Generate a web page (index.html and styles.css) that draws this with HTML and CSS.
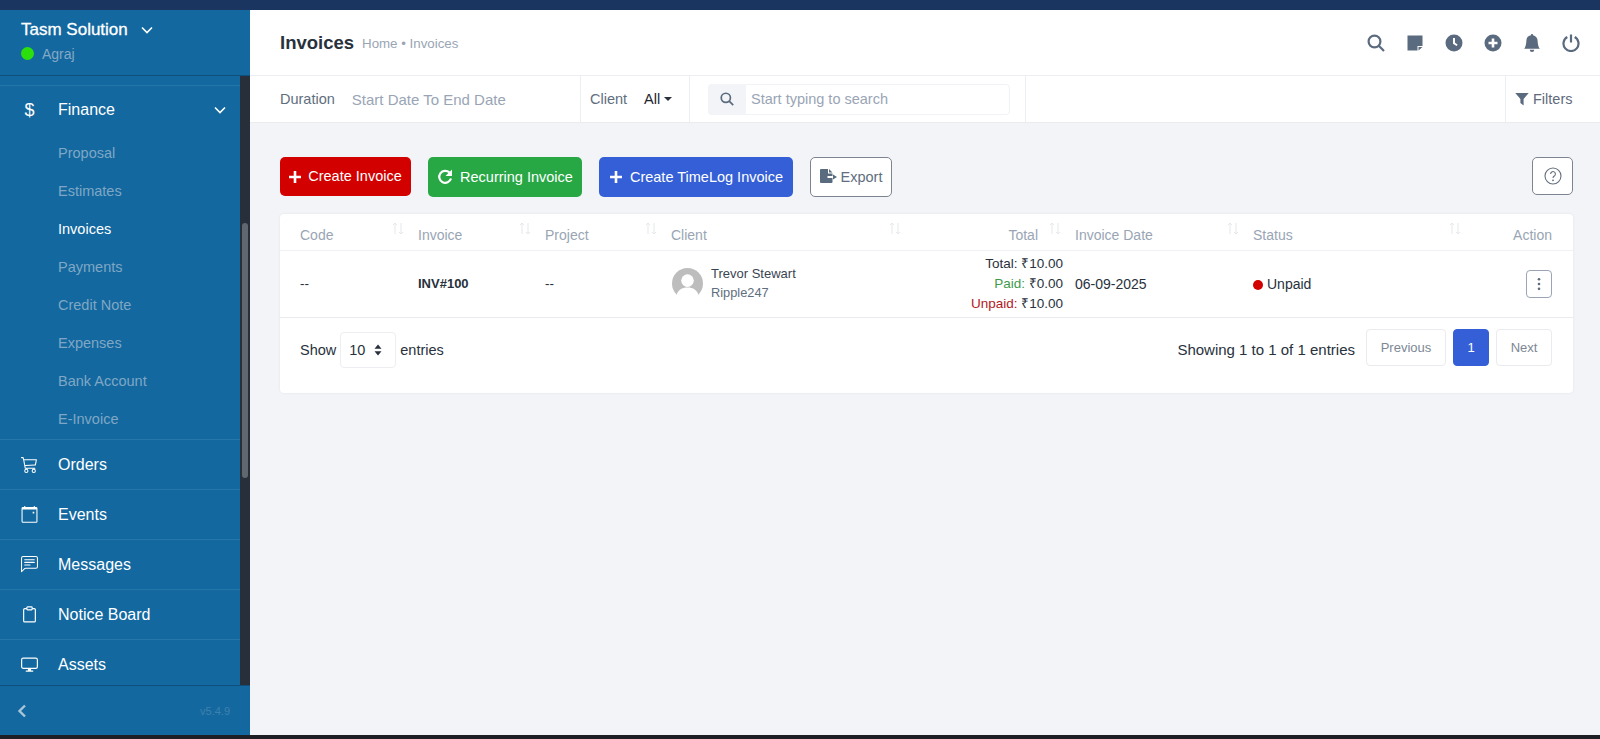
FILE: index.html
```html
<!DOCTYPE html>
<html lang="en">
<head>
<meta charset="utf-8">
<title>Invoices</title>
<link rel="stylesheet" href="styles.css">
</head>
<body>
<div class="app">
  <div class="topbar"></div>
  <div class="shell">
    <aside class="side">
      <div class="side-head">
        <div class="brand">Tasm Solution
          <svg class="brand-chev" viewBox="0 0 12 8"><path d="M1 1.500l5 5 5-5"/></svg>
        </div>
        <div class="user"><span class="online"></span><span>Agraj</span></div>
      </div>
      <div class="side-body">
        <nav class="nav">
          <div class="nav-group">
            <div class="nav-item nav-open">
              <span class="nav-icon nav-dollar">$</span><span class="nav-label">Finance</span>
              <svg class="nav-chev" viewBox="0 0 12 8"><path d="M1 1.500l5 5 5-5"/></svg>
            </div>
            <a class="sub">Proposal</a>
            <a class="sub">Estimates</a>
            <a class="sub sub-active">Invoices</a>
            <a class="sub">Payments</a>
            <a class="sub">Credit Note</a>
            <a class="sub">Expenses</a>
            <a class="sub">Bank Account</a>
            <a class="sub">E-Invoice</a>
          </div>
          <div class="nav-item">
            <span class="nav-icon"><svg viewBox="0 0 16 16" class="i-fill"><path d="M0 1.500A.5.5 0 0 1 .5 1H2a.5.5 0 0 1 .485.379L2.890 3H14.500a.5.5 0 0 1 .49.598l-1 5a.5.5 0 0 1-.465.401l-9.397.472L4.415 11H13a.5.5 0 0 1 0 1H4a.5.5 0 0 1-.491-.408L2.010 3.607 1.610 2H.5a.5.5 0 0 1-.5-.5zM3.102 4l.84 4.479 9.144-.459L13.890 4H3.102zM5 12a2 2 0 1 0 0 4 2 2 0 0 0 0-4zm7 0a2 2 0 1 0 0 4 2 2 0 0 0 0-4zm-7 1a1 1 0 1 1 0 2 1 1 0 0 1 0-2zm7 0a1 1 0 1 1 0 2 1 1 0 0 1 0-2z"/></svg></span>
            <span class="nav-label">Orders</span>
          </div>
          <div class="nav-item">
            <span class="nav-icon"><svg viewBox="0 0 16 16" class="i-fill"><path fill-rule="evenodd" d="M3 0h1v1h8V0h1v1h1.200a1.300 1.300 0 0 1 1.300 1.300v12.200a1.300 1.300 0 0 1-1.300 1.300H1.800a1.300 1.300 0 0 1-1.300-1.300V2.300A1.300 1.300 0 0 1 1.800 1H3zM1.500 3.200v11.300c0 .2.100.3.300.3h12.400c.2 0 .3-.1.3-.3V3.200zM11 5.500h1.500V7H11z"/></svg></span>
            <span class="nav-label">Events</span>
          </div>
          <div class="nav-item">
            <span class="nav-icon"><svg viewBox="0 0 16 16" class="i-fill"><path d="M14 1a1 1 0 0 1 1 1v8a1 1 0 0 1-1 1H4.414A2 2 0 0 0 3 11.586l-2 2V2a1 1 0 0 1 1-1h12zM2 0a2 2 0 0 0-2 2v12.793a.5.5 0 0 0 .854.353l2.853-2.853A1 1 0 0 1 4.414 12H14a2 2 0 0 0 2-2V2a2 2 0 0 0-2-2H2z"/><path d="M3 3.500a.5.5 0 0 1 .5-.5h9a.5.5 0 0 1 0 1h-9a.5.5 0 0 1-.5-.5zM3 6a.5.5 0 0 1 .5-.5h9a.5.5 0 0 1 0 1h-9A.5.5 0 0 1 3 6zm0 2.500a.5.5 0 0 1 .5-.5h5a.5.5 0 0 1 0 1h-5a.5.5 0 0 1-.5-.5z"/></svg></span>
            <span class="nav-label">Messages</span>
          </div>
          <div class="nav-item">
            <span class="nav-icon"><svg viewBox="0 0 16 16" class="i-line"><path d="M5.500 2.500H3.500a1 1 0 0 0-1 1v10.500a1 1 0 0 0 1 1h9a1 1 0 0 0 1-1V3.500a1 1 0 0 0-1-1h-2"/><rect x="5.500" y=".8" width="5" height="2.800" rx=".7"/></svg></span>
            <span class="nav-label">Notice Board</span>
          </div>
          <div class="nav-item">
            <span class="nav-icon"><svg viewBox="0 0 16 16" class="i-line"><rect x=".6" y="2" width="14.800" height="9.600" rx="1.500"/><path class="i-stand" d="M6.500 11.800h3v1.800h2v1.200h-7v-1.200h2z"/></svg></span>
            <span class="nav-label">Assets</span>
          </div>
        </nav>
        <div class="track"><div class="thumb"></div></div>
      </div>
      <div class="side-foot">
        <svg class="collapse" viewBox="0 0 10 14"><path d="M8 1.500L2.500 7 8 12.500"/></svg>
        <span class="version">v5.4.9</span>
      </div>
    </aside>

    <main class="main">
      <header class="head">
        <h1 class="title">Invoices</h1>
        <span class="crumb">Home • Invoices</span>
        <div class="head-icons">
          <svg viewBox="0 0 18 18" class="hi-line"><circle cx="7.500" cy="7.500" r="5.900"/><path d="M11.800 11.800L17 17"/></svg>
          <svg viewBox="0 0 18 18" class="hi-fill"><path d="M1.500 1.500h15v10.500h-5v4.500h-10zM12.500 13h4l-4 3.500z"/></svg>
          <svg viewBox="0 0 18 18" class="hi-fill"><path fill-rule="evenodd" d="M9 .5a8.500 8.500 0 1 1 0 17A8.500 8.500 0 0 1 9 .5zM8 4v5.700l3.600 2.200 1-1.500-2.600-1.600V4z"/></svg>
          <svg viewBox="0 0 18 18" class="hi-fill"><path fill-rule="evenodd" d="M9 .5a8.500 8.500 0 1 1 0 17A8.500 8.500 0 0 1 9 .5zM7.700 4.500v3.200H4.500v2.600h3.200v3.200h2.600v-3.200h3.200V7.700h-3.200V4.500z"/></svg>
          <svg viewBox="0 0 16 16" class="hi-fill"><path d="M8 16a2 2 0 0 0 2-2H6a2 2 0 0 0 2 2zm.995-14.901a1 1 0 1 0-1.990 0A5.002 5.002 0 0 0 3 6c0 1.098-.5 6-2 7h14c-1.500-1-2-5.902-2-7 0-2.420-1.720-4.440-4.005-4.901z"/></svg>
          <svg viewBox="0 0 18 18" class="hi-line"><path d="M5.300 3a7.500 7.500 0 1 0 7.400 0"/><path d="M9 .5v8"/></svg>
        </div>
      </header>
      <div class="filters">
        <div class="f-cell f-duration"><span class="f-label">Duration</span><span class="f-muted">Start Date To End Date</span></div>
        <div class="f-cell f-client"><span class="f-label">Client</span><span class="f-val">All</span><span class="caret"></span></div>
        <div class="f-cell f-search">
          <div class="search">
            <span class="search-addon"><svg viewBox="0 0 18 18" class="hi-line"><circle cx="7.500" cy="7.500" r="5.900"/><path d="M11.800 11.800L17 17"/></svg></span>
            <span class="search-text">Start typing to search</span>
          </div>
        </div>
        <div class="f-cell f-space"></div>
        <div class="f-cell f-more"><svg viewBox="0 0 14 14" class="hi-fill"><path d="M.3 1h13.400L8.600 7v6.500L5.400 11V7z"/></svg><span>Filters</span></div>
      </div>
      <section class="content">
        <div class="toolbar">
          <a class="btn btn-red">
            <svg viewBox="0 0 14 14" class="b-icon"><path d="M5.700 1h2.600v4.700H13v2.600H8.300V13H5.700V8.300H1V5.700h4.700z"/></svg><span class="btn-up">Create Invoice</span></a>
          <a class="btn btn-green">
            <svg viewBox="0 0 16 16" class="b-redo"><path d="M12.500 3.600A6 6 0 1 0 14 9.500"/><path class="b-redo-head" d="M15 .5v6.500H8.500z"/></svg>Recurring Invoice</a>
          <a class="btn btn-blue">
            <svg viewBox="0 0 14 14" class="b-icon"><path d="M5.700 1h2.600v4.700H13v2.600H8.300V13H5.700V8.300H1V5.700h4.700z"/></svg>Create TimeLog Invoice</a>
          <a class="btn btn-line">
            <svg viewBox="0 0 18 16" class="hi-fill b-export"><path d="M1 0h7v4.500h4.500V7H7.500v2h5v4a1 1 0 0 1-1 1H1a1 1 0 0 1-1-1V1a1 1 0 0 1 1-1zM9 0l3.500 3.500H9zM13 5.500L17 8l-4 2.500z"/></svg>Export</a>
          <a class="help"><svg viewBox="0 0 18 18"><circle cx="9" cy="9" r="8"/><path d="M6.600 7a2.400 2.400 0 1 1 3.700 2c-.8.500-1.300 1-1.300 2"/><circle class="help-dot" cx="9" cy="13.300" r=".9"/></svg></a>
        </div>
        <div class="card">
          <table class="tbl">
            <thead>
              <tr>
                <th class="c-code">Code<svg class="sort" viewBox="0 0 14 13"><path d="M4 12V1M2 3L4 1l2 2M10 1v11M8 10l2 2 2-2"/></svg></th>
                <th class="c-inv">Invoice<svg class="sort" viewBox="0 0 14 13"><path d="M4 12V1M2 3L4 1l2 2M10 1v11M8 10l2 2 2-2"/></svg></th>
                <th class="c-proj">Project<svg class="sort" viewBox="0 0 14 13"><path d="M4 12V1M2 3L4 1l2 2M10 1v11M8 10l2 2 2-2"/></svg></th>
                <th class="c-client">Client<svg class="sort" viewBox="0 0 14 13"><path d="M4 12V1M2 3L4 1l2 2M10 1v11M8 10l2 2 2-2"/></svg></th>
                <th class="c-total">Total<svg class="sort" viewBox="0 0 14 13"><path d="M4 12V1M2 3L4 1l2 2M10 1v11M8 10l2 2 2-2"/></svg></th>
                <th class="c-date">Invoice Date<svg class="sort" viewBox="0 0 14 13"><path d="M4 12V1M2 3L4 1l2 2M10 1v11M8 10l2 2 2-2"/></svg></th>
                <th class="c-status">Status<svg class="sort" viewBox="0 0 14 13"><path d="M4 12V1M2 3L4 1l2 2M10 1v11M8 10l2 2 2-2"/></svg></th>
                <th class="c-action">Action</th>
              </tr>
            </thead>
            <tbody>
              <tr>
                <td class="c-code">--</td>
                <td class="c-inv"><b class="inv-no">INV#100</b></td>
                <td class="c-proj">--</td>
                <td class="c-client">
                  <div class="client">
                    <svg class="avatar" viewBox="0 0 32 32"><circle class="av-bg" cx="16" cy="16" r="16"/><circle class="av-fg" cx="16" cy="13" r="6.500"/><path class="av-fg" d="M4.500 29c1-6.500 6-9 11.500-9s10.500 2.500 11.500 9a16 16 0 0 1-23 0z"/></svg>
                    <div class="client-text"><div class="client-name">Trevor Stewart</div><div class="client-co">Ripple247</div></div>
                  </div>
                </td>
                <td class="c-total amounts">
                  <div>Total: ₹10.00</div>
                  <div><span class="paid">Paid:</span> ₹0.00</div>
                  <div><span class="unpaid">Unpaid:</span> ₹10.00</div>
                </td>
                <td class="c-date c-wide">06-09-2025</td>
                <td class="c-status c-wide"><span class="dot"></span>Unpaid</td>
                <td class="c-action"><a class="more"><svg viewBox="0 0 4 16"><circle cx="2" cy="2.500" r="1.500"/><circle cx="2" cy="8" r="1.500"/><circle cx="2" cy="13.500" r="1.500"/></svg></a></td>
              </tr>
            </tbody>
          </table>
          <div class="tfoot">
            <div class="len">Show
              <span class="select">10<svg viewBox="0 0 8 12"><path d="M4 .5L7.500 4.700H.5zM4 11.500L.5 7.300h7z"/></svg></span>
              entries</div>
            <div class="info">Showing 1 to 1 of 1 entries</div>
            <div class="pager">
              <a class="pg pg-prev">Previous</a>
              <a class="pg pg-on">1</a>
              <a class="pg pg-next">Next</a>
            </div>
          </div>
        </div>
      </section>
    </main>
  </div>
  <div class="bottombar"></div>
</div>
</body>
</html>
```
FILE: styles.css
```css
* { box-sizing: border-box; }
html, body { margin: 0; padding: 0; height: 100%; overflow: hidden; }
body { font-family: "Liberation Sans", Arial, sans-serif; font-size: 14px; color: #28313c; background: #f2f4f7; }
.app { height: 100vh; display: flex; flex-direction: column; }
.topbar { height: 10px; flex: none; background: #1a3560; }
.bottombar { height: 4px; flex: none; background: #1d1f24; }
.shell { flex: 1; display: flex; min-height: 0; }

/* sidebar */
.side { width: 250px; flex: none; display: flex; flex-direction: column; background: #13689f; }
.side-head { height: 66px; flex: none; padding: 10px 0 0 21px; border-bottom: 1px solid #0f4f7e; }
.brand { font-size: 17px; font-weight: 400; color: #fff; line-height: 20px; display: flex; align-items: center; -webkit-text-stroke: .3px #fff; }
.brand-chev { width: 12px; height: 8px; margin-left: 13px; fill: none; stroke: #fff; stroke-width: 1.600; }
.user { display: flex; align-items: center; margin-top: 5px; font-size: 14px; color: #83a9c6; line-height: 18px; }
.online { width: 13px; height: 13px; border-radius: 50%; background: #2ce00d; margin-right: 8px; position: relative; top: -1px; }
.side-body { flex: 1; min-height: 0; display: flex; }
.nav { flex: 1; min-width: 0; overflow: hidden; padding-top: 9px; }
.nav-group { border-bottom: 1px solid #2576a9; border-top: 1px solid #2576a9; }
.nav-item { height: 50px; display: flex; align-items: center; padding-left: 21px; font-size: 16px; color: #fff; border-bottom: 1px solid #2576a9; }
.nav-open { height: 48px; border-bottom: 0; }
.nav-icon { width: 17px; height: 17px; margin-right: 20px; flex: none; display: flex; align-items: center; justify-content: center; }
.nav-icon svg { width: 17px; height: 17px; }
.nav-dollar { font-size: 18px; }
.nav-label { flex: 1; }
.nav-chev { width: 12px; height: 8px; margin-right: 14px; fill: none; stroke: #fff; stroke-width: 1.600; }
.i-fill { fill: #fff; }
.i-line { fill: none; stroke: #fff; stroke-width: 1.100; }
.i-stand { fill: #fff; stroke: none; }
.sub { display: block; height: 38px; line-height: 38px; padding-left: 58px; font-size: 14.500px; color: #7fa7c5; }
.sub:last-child { height: 39px; }
.sub-active { color: #fff; }
.track { width: 10px; flex: none; background: #272f3b; position: relative; }
.thumb { position: absolute; left: 2px; top: 147px; width: 6px; height: 255px; border-radius: 3px; background: #61676f; }
.side-foot { height: 50px; flex: none; display: flex; align-items: center; justify-content: space-between; padding: 0 20px 0 17px; border-top: 1px solid #0f4f7e; }
.collapse { width: 10px; height: 14px; fill: none; stroke: #a9c5da; stroke-width: 2.400; }
.version { font-size: 11px; color: #3f81ad; }

/* main */
.main { flex: 1; min-width: 0; display: flex; flex-direction: column; }
.head { height: 66px; flex: none; background: #fff; display: flex; align-items: center; padding: 0 20px 0 30px; border-bottom: 1px solid #eceef1; }
.title { font-size: 18.500px; font-weight: 700; margin: 0; color: #28313c; }
.crumb { margin-left: 8px; font-size: 13.300px; color: #99a5b5; position: relative; top: 1px; }
.head-icons { margin-left: auto; display: flex; gap: 21px; align-items: center; }
.head-icons svg { width: 18px; height: 18px; }
.hi-line { fill: none; stroke: #5b6b7f; stroke-width: 2.200; }
.hi-fill { fill: #5b6b7f; }
.filters { height: 47px; flex: none; background: #fff; display: flex; border-bottom: 1px solid #e9ebee; font-size: 14.500px; }
.f-cell { display: flex; align-items: center; border-right: 1px solid #eceef1; }
.f-duration { width: 331px; padding-left: 30px; }
.f-label { color: #616e7e; }
.f-muted { color: #99a5b5; margin-left: 17px; font-size: 15px; }
.f-client { width: 109px; padding-left: 9px; }
.f-val { color: #1d2530; margin-left: 17px; }
.caret { margin-left: 4px; border: 4px solid transparent; border-top-color: #28313c; border-bottom: 0; }
.f-search { width: 336px; padding-left: 18px; }
.search { width: 302px; height: 31px; display: flex; align-items: center; border: 1px solid #f0f2f5; border-radius: 4px; }
.search-addon { width: 38px; height: 31px; flex: none; background: #f2f4f7; border-radius: 4px 0 0 4px; display: flex; align-items: center; justify-content: center; margin-left: -1px; }
.search-addon svg { width: 14px; height: 14px; }
.search-text { margin-left: 5px; color: #99a5b5; }
.f-space { flex: 1; }
.f-more { width: 94px; border-right: 0; border-left: 0; padding-left: 9px; color: #5f6c7c; }
.f-more svg { width: 14px; height: 14px; margin-right: 4px; }
.content { flex: 1; min-height: 0; padding: 34px 27px 0 30px; }
.toolbar { display: flex; align-items: flex-start; gap: 17px; height: 40px; margin-bottom: 17px; }
.btn { height: 40px; display: flex; align-items: center; justify-content: center; border-radius: 5px; font-size: 14.500px; color: #fff; }
.btn-red { width: 131px; height: 39px; background: #d30000; }
.btn-up { position: relative; top: -1px; left: -1px; }
.btn-green { width: 154px; background: #28a745; }
.btn-blue { width: 194px; background: #355fd6; }
.btn-line { width: 82px; background: #fff; border: 1px solid #7b8490; color: #616e7e; }
.b-icon { width: 14px; height: 14px; fill: #fff; margin-right: 7px; }
.b-redo { width: 16px; height: 16px; fill: none; stroke: #fff; stroke-width: 2.200; margin-right: 7px; }
.b-redo-head { fill: #fff; stroke: none; }
.b-export { width: 18px; height: 16px; margin-right: 3px; }
.help { margin-left: auto; width: 41px; height: 38px; background: #fff; border: 1px solid #7b8490; border-radius: 5px; display: flex; align-items: center; justify-content: center; }
.help svg { width: 18px; height: 18px; fill: none; stroke: #616e7e; stroke-width: 1.100; }
.help-dot { fill: #616e7e; stroke: none; }
.card { height: 179px; background: #fff; border-radius: 4px; box-shadow: 0 0 3px rgba(30, 40, 60, .07); }
.tbl { width: 100%; border-collapse: collapse; table-layout: fixed; }
.tbl th { height: 36px; padding: 6px 0 0; text-align: left; font-weight: 400; font-size: 14px; color: #99a5b5; position: relative; border-bottom: 1px solid #eff1f4; }
.tbl td { height: 67px; padding: 0; font-size: 13.500px; color: #28313c; border-bottom: 1px solid #e9ebee; }
.tbl td.c-wide { font-size: 14px; }
.sort { position: absolute; right: 13px; top: 8px; width: 14px; height: 13px; fill: none; stroke: #e4e7eb; stroke-width: 1; }
.c-code { width: 138px; padding-left: 20px !important; }
.c-inv { width: 127px; }
.c-proj { width: 126px; }
.c-client { width: 244px; }
.c-total { width: 160px; text-align: right !important; }
th.c-total { padding-right: 37px !important; }
td.c-total { padding-right: 12px !important; }
.c-date { width: 178px; }
.c-status { width: 222px; }
.c-action { text-align: right !important; padding-right: 21px !important; }
.inv-no { font-weight: 700; font-size: 13px; }
.client { display: flex; align-items: center; padding-left: 1px; }
.avatar { width: 31px; height: 31px; flex: none; margin-right: 8px; }
.av-bg { fill: #bdbdbd; }
.av-fg { fill: #fff; }
.client-name { font-size: 13px; line-height: 19px; color: #3a4452; }
.client-co { font-size: 12.800px; line-height: 19px; color: #616e7e; }
.client-text { position: relative; top: -1px; }
.amounts div { line-height: 20px; }
.paid { color: #3f9a4d; }
.unpaid { color: #b3181e; }
.dot { display: inline-block; width: 10px; height: 10px; border-radius: 50%; background: #d30000; margin-right: 4px; vertical-align: -1px; }
.more { display: inline-flex; width: 26px; height: 28px; border: 1px solid #99a5b5; border-radius: 4px; align-items: center; justify-content: center; vertical-align: middle; }
.more svg { width: 4px; height: 14px; fill: #5f6c7c; }
.tfoot { display: flex; align-items: flex-start; padding: 0 21px 0 20px; font-size: 14.500px; color: #28313c; }
.len { display: flex; align-items: center; margin-top: 14px; height: 36px; }
.select { width: 56px; height: 36px; margin: 0 4px; display: flex; align-items: center; padding-left: 8px; border: 1px solid #eceef1; border-radius: 4px; font-size: 14.500px; }
.select svg { width: 8px; height: 12px; margin-left: 9px; fill: #28313c; }
.info { margin-left: auto; margin-top: 22px; line-height: 20px; font-size: 15px; }
.pager { display: flex; gap: 7px; margin-left: 11px; margin-top: 11px; }
.pg { height: 37px; display: flex; align-items: center; justify-content: center; border: 1px solid #e9ebee; border-radius: 4px; font-size: 13px; color: #7d8896; background: #fff; }
.pg-prev { width: 80px; }
.pg-on { width: 36px; background: #355fd6; border-color: #355fd6; color: #fff; }
.pg-next { width: 56px; }
```
